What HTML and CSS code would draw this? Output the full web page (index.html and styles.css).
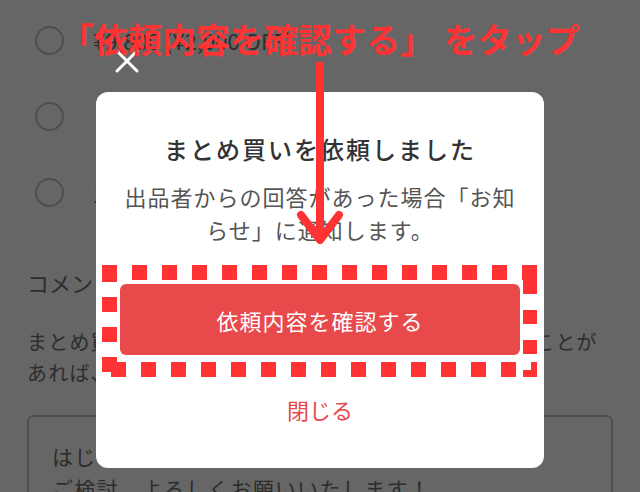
FILE: index.html
```html
<!DOCTYPE html>
<html lang="ja">
<head>
<meta charset="utf-8">
<title>まとめ買い</title>
<link rel="stylesheet" href="styles.css">
</head>
<body>
<main class="page">
  <ul class="options">
    <li class="option"><span class="radio"></span><span class="option-label">¥9,800 (¥2,000 OFF)</span></li>
    <li class="option"><span class="radio"></span><span class="option-label">　¥8,000 (¥3,000 OFF)</span></li>
    <li class="option"><span class="radio"></span><span class="option-label">三その他の金額</span></li>
  </ul>
  <section class="comment">
    <h2 class="comment-title">コメント</h2>
    <p class="comment-help">まとめ買いの依頼について、出品者様にお伝えしたいことが<br>あれば、こちらにご記入ください。</p>
    <div class="textarea">はじめまして。まとめ買いを希望します。<br>ご検討、よろしくお願いいたします！</div>
  </section>
</main>

<div class="overlay">
  <div class="dialog">
    <button class="close" aria-label="閉じる">
      <svg width="26" height="26" viewBox="0 0 26 26"><path d="M3 3 L23 23 M23 3 L3 23" stroke="#fff" stroke-width="3" stroke-linecap="round" fill="none"/></svg>
    </button>
    <div class="modal">
      <h1 class="modal-title">まとめ買いを依頼しました</h1>
      <p class="modal-text">出品者からの回答があった場合「お知<br>らせ」に通知します。</p>
      <button class="primary">依頼内容を確認する</button>
      <button class="text-link">閉じる</button>
    </div>
  </div>
</div>

<div class="annotation">
  <p class="callout">「依頼内容を確認する」 をタップ</p>
  <svg class="marks" width="640" height="492" viewBox="0 0 640 492">
    <g stroke="#ff3333" fill="none">
      <line x1="320" y1="62" x2="320" y2="238" stroke-width="8"/>
      <polyline points="301,215 320,240 339,215" stroke-width="8" stroke-linecap="round" stroke-linejoin="round"/>
      <line x1="102" y1="272.5" x2="537" y2="272.5" stroke-width="15" stroke-dasharray="15 15"/>
      <line x1="530" y1="280" x2="530" y2="377" stroke-width="14" stroke-dasharray="14 16"/>
      <line x1="111" y1="369.5" x2="537" y2="369.5" stroke-width="15" stroke-dasharray="15 15"/>
      <line x1="109.5" y1="267" x2="109.5" y2="372" stroke-width="15" stroke-dasharray="15 15"/>
    </g>
  </svg>
</div>
</body>
</html>
```

FILE: styles.css
```css
* { box-sizing: border-box; }

html, body {
  margin: 0;
  width: 640px;
  height: 492px;
  overflow: hidden;
}

body {
  font-family: "Noto Sans CJK JP", "Noto Sans", sans-serif;
  background: #fff;
  color: #707070;
  position: relative;
}

.page {
  padding: 2px 0 0 27px;
}

.options {
  list-style: none;
  margin: 0;
  padding: 0;
}

.option {
  height: 76px;
  display: flex;
  align-items: center;
  gap: 29px;
  font-size: 22px;
}

.radio {
  width: 29px;
  height: 29px;
  margin-left: 8px;
  border: 2.5px solid #c4c4c4;
  border-radius: 50%;
  flex: none;
}

.comment-title {
  margin: 36px 0 0;
  font-size: 22px;
  line-height: 32px;
  font-weight: 400;
}

.comment-help {
  margin: 28px 0 0;
  font-size: 20px;
  line-height: 31px;
  letter-spacing: 1.2px;
  white-space: nowrap;
}

.textarea {
  margin: 27px 27px 0 0;
  border: 2px solid #c4c4c4;
  border-radius: 6px;
  padding: 23px 23px 0;
  font-size: 21px;
  line-height: 32px;
  letter-spacing: 1.3px;
  height: 90px;
}

.overlay {
  position: absolute;
  inset: 0;
  background: rgba(0, 0, 0, 0.6);
  display: flex;
  flex-direction: column;
  align-items: center;
  padding-top: 48px;
}

.dialog {
  width: 448px;
}

.close {
  display: block;
  width: 26px;
  height: 26px;
  margin: 0 0 18px 18px;
  padding: 0;
  border: none;
  background: none;
}

.close svg { display: block; }

.modal {
  background: #fff;
  border-radius: 12px;
  padding: 40px 24px 44px;
  display: flex;
  flex-direction: column;
  align-items: center;
  text-align: center;
}

.modal-title {
  margin: 0;
  font-size: 24px;
  line-height: 34px;
  font-weight: 500;
  letter-spacing: 2px;
  color: #333;
}

.modal-text {
  margin: 14px 0 0;
  font-size: 22px;
  line-height: 33px;
  letter-spacing: 1px;
  color: #555;
}

.primary {
  margin-top: 38px;
  width: 100%;
  height: 71px;
  border: none;
  border-radius: 6px;
  background: #e8494b;
  color: #fff;
  font-family: inherit;
  font-size: 22px;
  letter-spacing: 1px;
}

.text-link {
  margin-top: 39px;
  border: none;
  background: none;
  padding: 0;
  font-family: inherit;
  font-size: 22px;
  line-height: 30px;
  color: #e8494b;
}

.annotation {
  position: absolute;
  inset: 0;
  pointer-events: none;
}

.callout {
  position: absolute;
  top: 21px;
  left: 60px;
  margin: 0;
  font-size: 34px;
  line-height: 36px;
  font-weight: 700;
  word-spacing: 2px;
  color: #ff3333;
  white-space: nowrap;
}

.marks {
  position: absolute;
  top: 0;
  left: 0;
}
```
